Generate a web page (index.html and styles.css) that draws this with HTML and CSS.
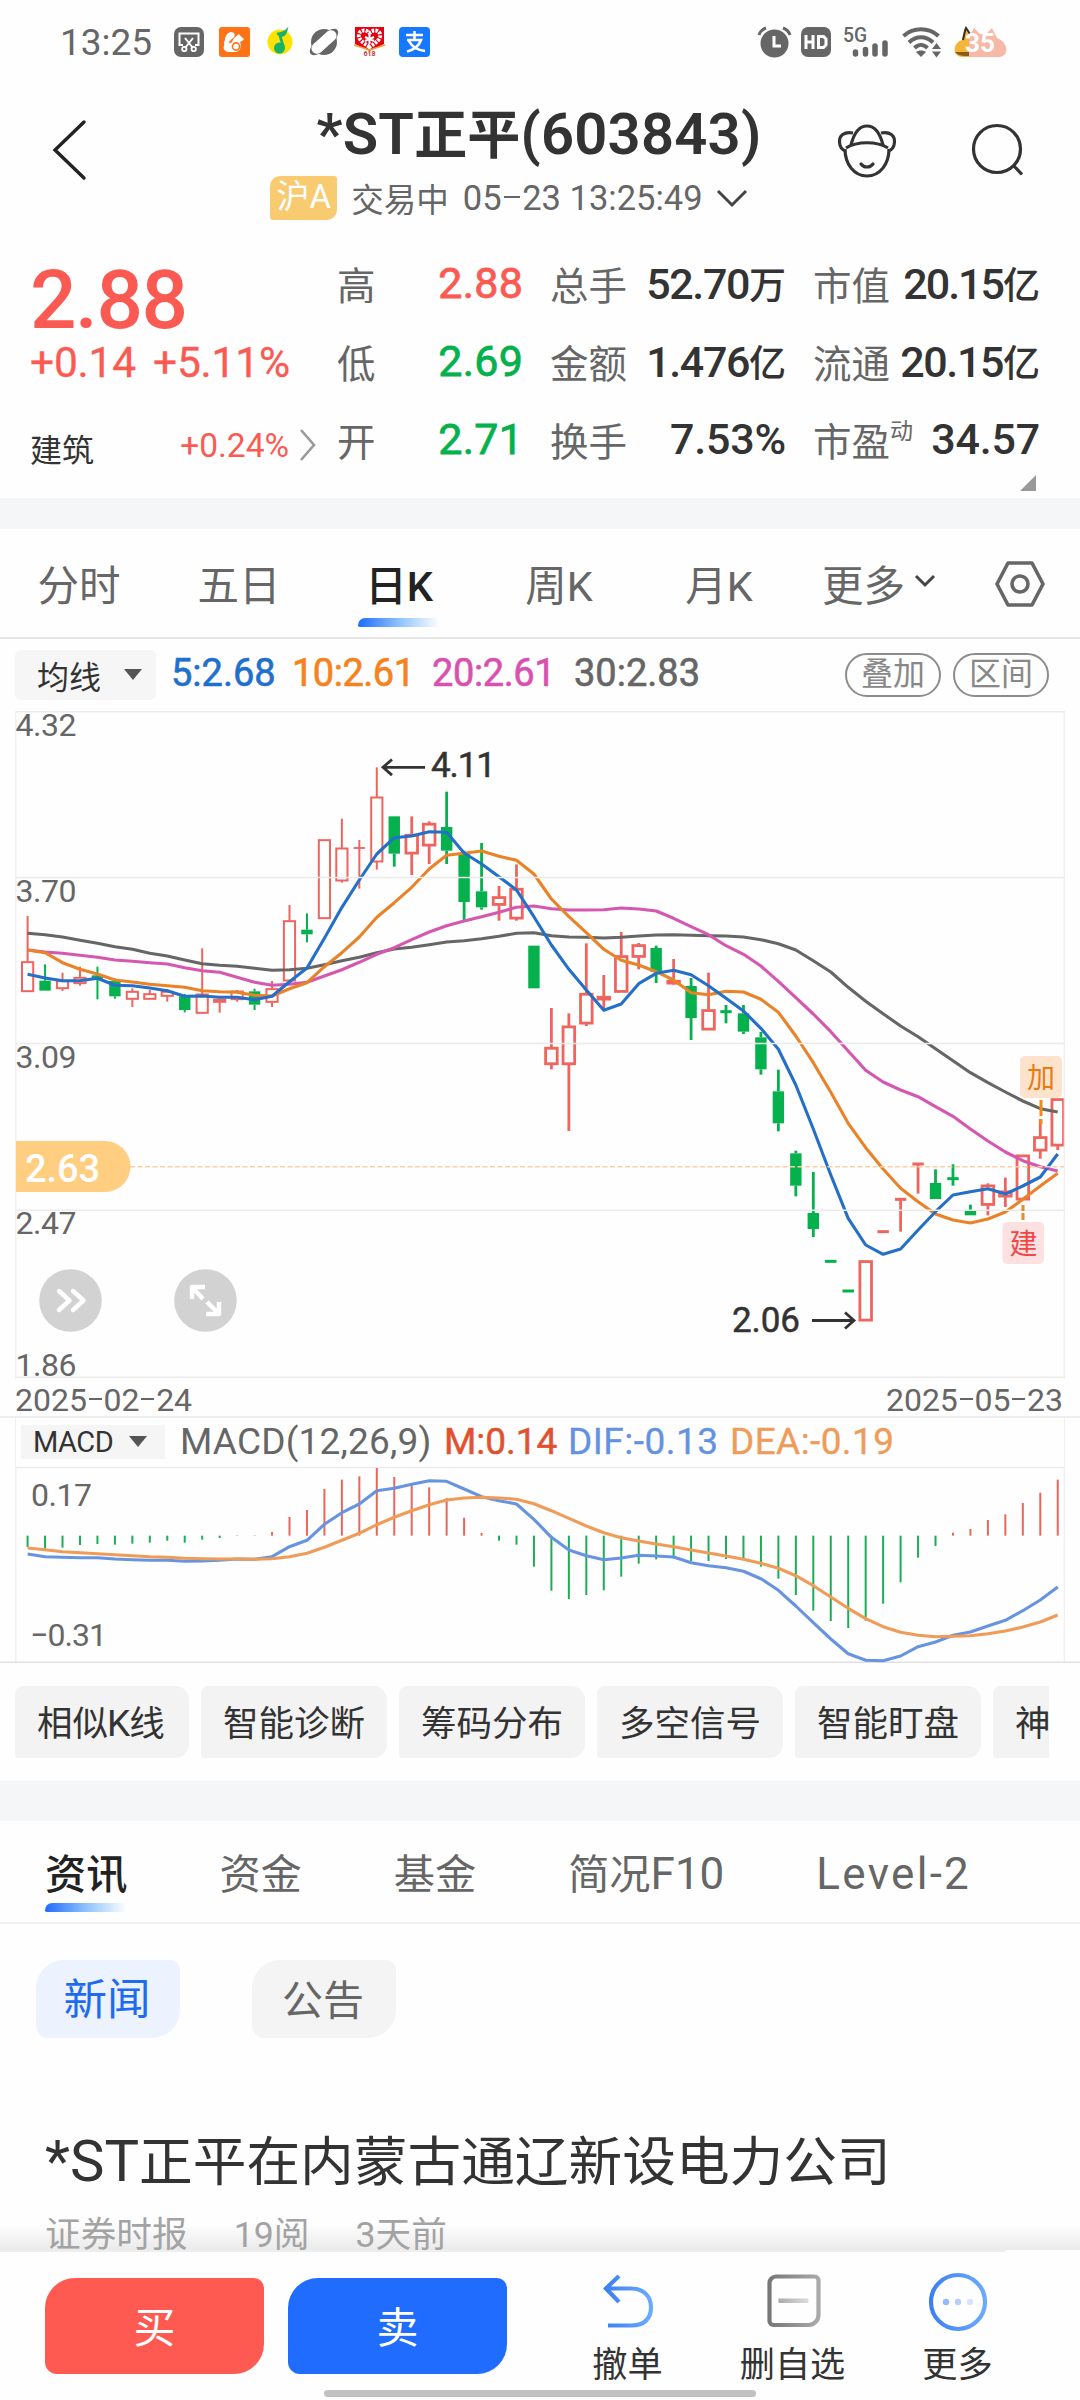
FILE: index.html
```html
<!DOCTYPE html>
<html lang="zh-CN">
<head>
<meta charset="utf-8">
<meta name="viewport" content="width=1080">
<title>*ST正平(603843)</title>
<link rel="stylesheet" href="styles.css">
</head>
<body>
<div class="screen">

<div class="status">
  <span class="clock">13:25</span>
  <div class="status-apps">
    <svg width="30" height="30" viewBox="0 0 30 30"><rect width="30" height="30" rx="7" fill="#666"/><path d="M9 18H5.500V6.500h19V18H21" fill="none" stroke="#fff" stroke-width="2"/><path d="M11 11l8 10M19 11l-8 10" stroke="#fff" stroke-width="2"/><circle cx="10.300" cy="22" r="2.200" fill="none" stroke="#fff" stroke-width="1.800"/><circle cx="19.700" cy="22" r="2.200" fill="none" stroke="#fff" stroke-width="1.800"/></svg>
    <svg width="31" height="30" viewBox="0 0 31 30"><rect width="31" height="30" rx="3" fill="#ff7216"/><path d="M6 13c0-4 3-8 6-8 4 0 5 4 2 6-2 2-4 3-4 5 2 1 3-1 4-3 1-3 4-4 6-6 1 2 3 3 5 5-1 2-3 2-4 3 2 5 0 9-4 10h-8c-4-1-5-4-4-6 1-3-1-3 1-6z" fill="#fff"/><circle cx="17" cy="19.500" r="3.600" fill="none" stroke="#ff7216" stroke-width="1.600"/></svg>
    <svg width="26" height="30" viewBox="0 0 26 30"><circle cx="13" cy="15" r="12.500" fill="#ffe100"/><path d="M10 7c3-1 6 0 9-3-1 4-3 5-6 5l3.500 11" fill="none" stroke="#17b26a" stroke-width="2.600"/><circle cx="12.500" cy="21" r="5.500" fill="#17b26a"/></svg>
    <svg width="30" height="30" viewBox="0 0 30 30"><ellipse cx="15" cy="15" rx="18" ry="7" transform="rotate(-42 15 15)" fill="#666"/><circle cx="15" cy="15" r="13" fill="#666"/><rect x="0" y="9.500" width="30" height="11" rx="5.500" transform="rotate(-42 15 15)" fill="#fff"/></svg>
    <svg width="31" height="30" viewBox="0 0 31 30"><path d="M1 0h29v17l-14.500 7L1 17z" fill="#e60012"/><path d="M15.500 20C8 15 4 12 5 7c1-4 7-5 10.500-1C19 2 25 3 26 7c1 5-3 8-10.500 13z" fill="none" stroke="#fff" stroke-width="4" stroke-dasharray="2.500 1.200"/><path d="M15.500 8v9M11 10l9 4M20 10l-9 4" stroke="#fff" stroke-width="2"/><path d="M0 18l15.500 5L31 18" fill="none" stroke="#e9a13b" stroke-width="1.500"/><text x="15.500" y="29" class="app-618">618</text></svg>
    <svg width="31" height="30" viewBox="0 0 31 30"><rect width="31" height="30" rx="4" fill="#1677ff"/><path d="M15.500 4v8M7 8h17M8 13h14c-2 6-8 10-14 11.500M10 14c3 6 8 9 16 10" fill="none" stroke="#fff" stroke-width="2.600"/></svg>
  </div>
  <div class="status-sys">
    <svg width="33" height="31" viewBox="0 0 33 31"><circle cx="16.500" cy="16.500" r="14" fill="#666"/><path d="M1 8c1-3 4-6 7-7M32 8c-1-3-4-6-7-7" stroke="#666" stroke-width="3" fill="none"/><path d="M16 9v10h7" stroke="#fff" stroke-width="3" fill="none"/></svg>
    <svg width="30" height="30" viewBox="0 0 30 30"><rect width="30" height="30" rx="7" fill="#666"/><path d="M5 8v14M5 15h7M12 8v14M17.500 9.500h5l2.500 2.500v6l-2.500 2.500h-5z" fill="none" stroke="#fff" stroke-width="3"/></svg>
    <svg width="46" height="31" viewBox="0 0 46 31"><text x="0" y="15" class="net" textLength="24" lengthAdjust="spacingAndGlyphs">5G</text><path d="M12.500 25v2M22.500 22.500v4.500M32 19v8M42 16v11" stroke="#666" stroke-width="5.500" stroke-linecap="round"/></svg>
    <svg width="41" height="31" viewBox="0 0 41 31"><g fill="none" stroke="#666" stroke-width="4"><path d="M1.500 9c10-9 25-9 35 0M7 15.500c7-7 17-7 24 0M12.500 21c4-4 9-4 13 0"/></g><path d="M14 25c3-2 7-2 10 0l-5 5z" fill="#666"/><path d="M30 22l4.500-6 4.500 6zM30 24.500l4.500 6 4.500-6z" fill="#666"/></svg>
    <svg width="55" height="31" viewBox="0 0 55 31"><path d="M16 30H10C-1 30-1 16 9 13L12 2l5 6z" fill="#f5b638"/><path d="M10 13c1-5 2-10 3-12l4 6" fill="none" stroke="#3a2a18" stroke-width="2"/><path d="M2 25c3 4 8 4 14 4v-4z" fill="#8a5a1a"/><path d="M16 30V10l5-9 6 6h6l6-6 5 10c10 3 14 18 2 19z" fill="#f8b8a8"/><text x="12" y="24.500" class="bat" textLength="30" lengthAdjust="spacingAndGlyphs">35</text></svg>
  </div>
</div>

<header class="head">
  <svg class="back" width="40" height="64" viewBox="0 0 40 64"><path d="M35 4L6 32l29 28" fill="none" stroke="#222" stroke-width="3.400" stroke-linecap="round"/></svg>
  <div class="head-mid">
    <h1 class="name">*ST<span class="name-cjk">正平</span>(603843)</h1>
    <div class="state">
      <span class="market">沪A</span>
      <span class="trading">交易中</span>
      <span class="stamp">05<i class="dash"></i>23 13:25:49</span>
      <svg width="32" height="20" viewBox="0 0 32 20"><path d="M2 3l14 14L30 3" fill="none" stroke="#444" stroke-width="3"/></svg>
    </div>
  </div>
  <svg class="face" width="60" height="56" viewBox="0 0 60 56"><g fill="none" stroke="#333" stroke-width="3.200"><path d="M8 26C8 41 17 53 30 53s22-12 22-27"/><path d="M9 25C20 18 40 18 51 25"/><path d="M14 22C17 10 22 3 30 3s13 7 16 19"/><path d="M16 10C7 8 2 13 2.500 19c.3 5 3 8 6 9M44 10c9-2 14 3 13.500 9-.3 5-3 8-6 9"/><path d="M24 41c3 4 9 4 12 0" stroke-linecap="round"/></g></svg>
  <svg class="search" width="54" height="54" viewBox="0 0 54 54"><circle cx="26" cy="26" r="23.500" fill="none" stroke="#333" stroke-width="3.200"/><path d="M42.500 42.500l8.500 9" stroke="#333" stroke-width="3.200"/></svg>
</header>

<section class="quote">
  <div class="quote-main">
    <div class="price up">2.88</div>
    <div class="change up"><span>+0.14</span><span>+5.11%</span></div>
    <div class="industry"><span>建筑</span><span class="up pct">+0.24%</span><svg width="18" height="32" viewBox="0 0 18 32"><path d="M2 1l13 15L2 31" fill="none" stroke="#999" stroke-width="2.600"/></svg></div>
  </div>
  <div class="quote-grid">
    <div class="kv"><b>高</b><em class="up">2.88</em></div>
    <div class="kv"><b>总手</b><em class="snug">52.70<s>万</s></em></div>
    <div class="kv"><b>市值</b><em class="tight">20.15<s>亿</s></em></div>
    <div class="kv"><b>低</b><em class="down">2.69</em></div>
    <div class="kv"><b>金额</b><em class="snug">1.476<s>亿</s></em></div>
    <div class="kv"><b>流通</b><em class="snug">20.15<s>亿</s></em></div>
    <div class="kv"><b>开</b><em class="down">2.71</em></div>
    <div class="kv"><b>换手</b><em>7.53%</em></div>
    <div class="kv"><b>市盈<sup>动</sup></b><em>34.57</em></div>
  </div>
  <svg class="corner" width="16" height="16" viewBox="0 0 16 16"><path d="M16 0v16H0z" fill="#999"/></svg>
</section>

<nav class="ktabs">
  <span>分时</span><span>五日</span><span class="on">日K</span><span>周K</span><span>月K</span>
  <span class="more">更多<svg width="22" height="14" viewBox="0 0 22 14"><path d="M2 2l9 9 9-9" fill="none" stroke="#444" stroke-width="3"/></svg></span>
  <span><svg width="50" height="46" viewBox="0 0 50 46"><path d="M13 2h24l11 21-11 21H13L2 23z" fill="none" stroke="#666" stroke-width="3.600" stroke-linejoin="round"/><circle cx="25" cy="23" r="8" fill="none" stroke="#666" stroke-width="3.600"/></svg></span>
</nav>

<div class="ma-row">
  <span class="pick">均线<i class="tri"></i></span>
  <span class="ma ma5">5:2.68</span><span class="ma ma10">10:2.61</span><span class="ma ma20">20:2.61</span><span class="ma ma30">30:2.83</span>
  <span class="pill first">叠加</span><span class="pill">区间</span>
</div>

<svg class="kline" width="1080" height="668" viewBox="0 711 1080 668">
  <g id="candles"></g>
  <g id="averages"></g>
  <path d="M15.800 711v668M1064.300 711v668" stroke="#eee" stroke-width="1.200"/>
  <path d="M16 711.700H1065M16 877.500H1065M16 1043.500H1065M16 1210.300H1065M16 1377.300H1065" stroke="#ebebeb" stroke-width="1.500"/>
  <path d="M130 1166.700H1064" stroke="#f9cfa6" stroke-width="1.500" stroke-dasharray="5 2.500"/>
  <g class="axis">
    <text x="15.500" y="735.500" textLength="61">4.32</text>
    <text x="15.500" y="901.500" textLength="61">3.70</text>
    <text x="15.500" y="1067.500" textLength="61">3.09</text>
    <text x="15.500" y="1234" textLength="61">2.47</text>
    <text x="15.500" y="1376" textLength="61">1.86</text>
  </g>
  <path d="M425 767.300H384M392 759.500l-9 7.800 9 7.800" class="arrow"/>
  <text x="431" y="777" class="extreme" textLength="65">4.11</text>
  <text x="732" y="1332" class="extreme" textLength="68">2.06</text>
  <path d="M812 1320.500H854M845 1312.500l9 8-9 8" class="arrow"/>
  <path d="M1041 1100v16M1041 1119v5M1023 1205v6M1023 1213v7" stroke="#ef8a1d" stroke-width="3"/>
  <rect x="1020" y="1056" width="42" height="42" rx="5" fill="#fde3cc"/><text x="1041" y="1088" class="mark add">加</text>
  <rect x="1002.500" y="1222" width="41.500" height="42" rx="5" fill="#fde0e0"/><text x="1023.500" y="1254" class="mark open">建</text>
  <path d="M16 1141h89a25.500 25.500 0 0 1 0 51H16z" fill="#ffce80"/>
  <text x="25" y="1181.500" class="cost" textLength="75">2.63</text>
  <circle cx="70.500" cy="1300.500" r="31.300" fill="#d2d2d2"/>
  <path d="M59 1291l10.500 9.500L59 1310M73 1291l10.500 9.500L73 1310" fill="none" stroke="#fff" stroke-width="4.400" stroke-linecap="round" stroke-linejoin="round"/>
  <circle cx="205.500" cy="1300.500" r="31.300" fill="#d2d2d2"/>
  <path d="M192 1299v-12h13M192 1287l11 12M207 1302l12 12M219 1302v12h-13" fill="none" stroke="#fff" stroke-width="4.400" stroke-linejoin="round"/>
</svg>

<div class="dates"><span>2025<i class="dash"></i>02<i class="dash"></i>24</span><span>2025<i class="dash"></i>05<i class="dash"></i>23</span></div>

<div class="macd-row">
  <span class="macd-pick">MACD<i class="tri"></i></span>
  <span class="m-name">MACD(12,26,9)</span><span class="m-m">M:0.14</span><span class="m-dif">DIF:-0.13</span><span class="m-dea">DEA:-0.19</span>
</div>
<svg class="macd" width="1080" height="196" viewBox="0 1467 1080 196">
  <path d="M15.800 1467v195M1064.300 1467v195" stroke="#eee" stroke-width="1.200"/>
  <path d="M16 1467.500H1065" stroke="#ebebeb" stroke-width="1.600"/>
  <g id="bars"></g>
  <path d="M0 1662.200H1080" stroke="#e0e0e0" stroke-width="1.600"/>
  <g id="macdlines"></g>
  <g class="axis">
    <text x="31" y="1506" textLength="61">0.17</text>
    <text x="30" y="1646" textLength="77">−0.31</text>
  </g>
</svg>

<div class="tools">
  <span>相似<u>K</u>线</span><span>智能诊断</span><span>筹码分布</span><span>多空信号</span><span>智能盯盘</span><span>神奇九转</span>
</div>

<nav class="infotabs">
  <span class="on">资讯</span><span>资金</span><span>基金</span><span>简况<u>F10</u></span><span class="level"><u>Level-2</u></span>
</nav>
<div class="subtabs"><span class="on">新闻</span><span>公告</span></div>

<article class="news">
  <h2><u>*ST</u>正平在内蒙古通辽新设电力公司</h2>
  <p><span>证券时报</span><span>19阅</span><span>3天前</span></p>
</article>

<footer class="bar">
  <span class="trade buy">买</span>
  <span class="trade sell">卖</span>
  <div class="acts">
    <div class="act">
      <svg width="60" height="60" viewBox="0 0 60 60"><defs><linearGradient id="ga" x1="0" x2="1"><stop offset="0" stop-color="#3f7ff2"/><stop offset="1" stop-color="#6aabfb"/></linearGradient></defs><path d="M21 4L8 16.500 21 30M9 16.500h24c13 0 20 8 20 19s-7 18-19 18H10" fill="none" stroke="url(#ga)" stroke-width="4.200"/></svg>
      <span>撤单</span>
    </div>
    <div class="act">
      <svg width="60" height="60" viewBox="0 0 60 60"><defs><linearGradient id="gb" x1="0" x2="1"><stop offset="0" stop-color="#777"/><stop offset="1" stop-color="#aaa"/></linearGradient><linearGradient id="gc" x1="0" x2="1"><stop offset="0" stop-color="#aaa"/><stop offset="1" stop-color="#ddd"/></linearGradient></defs><path d="M13 4.500h38.500a4 4 0 0 1 4 4V43a10 10 0 0 1-10 10H10.500a4 4 0 0 1-4-4V11a6.500 6.500 0 0 1 6.500-6.500z" fill="none" stroke="url(#gb)" stroke-width="4.200"/><rect x="15.500" y="26.500" width="30" height="4.500" fill="url(#gc)"/></svg>
      <span>删自选</span>
    </div>
    <div class="act">
      <svg width="60" height="60" viewBox="0 0 60 60"><circle cx="30" cy="30" r="27" fill="none" stroke="url(#ga)" stroke-width="4.200"/><circle cx="18" cy="30" r="3.200" fill="#98b9f5"/><circle cx="30" cy="30" r="3.200" fill="#b4d0fa"/><circle cx="42" cy="30" r="3.200" fill="#d4e6fd"/></svg>
      <span>更多</span>
    </div>
  </div>
  <i class="home"></i>
</footer>
</div>
<script src="chart.js"></script>
</body>
</html>
```
FILE: styles.css
```css
* { box-sizing: border-box; margin: 0; padding: 0; }
body { background: #fefefe; font-family: Roboto, "Noto Sans CJK SC", sans-serif; color: #333; }
i, em, b, s, u { font-style: normal; font-weight: inherit; text-decoration: none; }
svg { display: block; flex: none; overflow: visible; }
.kline, .macd { overflow: hidden; }
span { white-space: nowrap; }
.screen { width: 1080px; height: 2400px; overflow: hidden; position: relative; display: flex; flex-direction: column; background: #fefefe; }
.screen > * { flex: none; }
.up { color: #fb5a52; }
.down { color: #04b14c; }
.dash { display: inline-block; width: .46em; height: 2.5px; margin: 0 .07em; background: currentColor; vertical-align: .34em; }

.status { height: 66px; display: flex; align-items: flex-start; padding: 24px 72px 0 60px; }
.clock { font-size: 37px; line-height: 37px; color: #666; width: 114px; }
.status-apps { display: flex; padding-top: 3px; gap: 15px; }
.status-apps svg:nth-child(3) { margin: 0 1px 0 2px; }
.status-apps svg:nth-child(5) { margin: 0 -1px 0 0; }
.status-sys { display: flex; gap: 10px; margin-left: auto; padding-top: 3px; }
.status-sys svg:nth-child(3) { margin-left: 2px; }
.status-sys svg:nth-child(4) { margin-left: 3px; }
.app-618 { font-size: 7px; font-weight: 700; fill: #c33; text-anchor: middle; }
.net { font-size: 20px; font-weight: 500; fill: #666; }
.bat { font-size: 26px; font-weight: 700; fill: #fff; }

.head { height: 174px; display: flex; align-items: flex-start; position: relative; padding: 0 56px 0 49px; }
.back { margin-top: 52px; }
.head-mid { width: 656px; margin-left: 92px; display: flex; flex-direction: column; align-items: center; padding-top: 32px; }
.name { font-size: 58px; line-height: 72px; font-weight: 600; white-space: nowrap; padding-left: 60px; letter-spacing: .2px; }
.name-cjk { font-size: 53px; font-weight: 700; }
.state { display: flex; align-items: center; height: 44px; margin-top: 4px; color: #666; }
.market { width: 67px; height: 44px; line-height: 42px; text-align: center; background: #f8cb70; color: #fff; font-size: 33px; border-radius: 10px 3px 10px 3px; }
.trading { font-size: 32.5px; margin: -2px 0 0 14px; }
.stamp { font-size: 34.5px; margin: 0 14px; width: 239px; }
.face { position: absolute; left: 837px; top: 57px; }
.search { position: absolute; left: 971px; top: 57px; }

.quote { height: 258px; display: flex; position: relative; padding: 4px 0 0 30px; }
.quote-main { width: 307px; }
.price { font-size: 82px; line-height: 84px; margin: 14px 0 0 0; font-weight: 500; letter-spacing: -1.5px; }
.change { font-size: 42.500px; line-height: 44px; margin-top: -1px; display: flex; gap: 17px; }
.change span { letter-spacing: -.2px; -webkit-text-stroke: .3px; }
.industry { display: flex; align-items: center; height: 60px; margin-top: 33px; font-size: 32px; }
.pct { font-size: 33.500px; margin-left: auto; margin-right: 10px; margin-top: -5px; }
.industry svg { margin-right: 20px; margin-top: -6px; }
.quote-grid { width: 703px; display: grid; grid-template-columns: 186px 236px 227px; column-gap: 27px; grid-auto-rows: 78px; }
.kv { display: flex; justify-content: space-between; align-items: center; white-space: nowrap; }
.kv b { font-size: 38.500px; color: #666; }
.kv em { font-size: 43px; font-weight: 500; letter-spacing: -.2px; }
.kv em.snug { letter-spacing: -1.400px; }
.kv em.tight { letter-spacing: -2px; }
.kv em.up, .kv em.down { font-weight: 400; -webkit-text-stroke: .8px; letter-spacing: .2px; }
.kv s { font-size: 37px; letter-spacing: 0; }
.kv sup { font-size: 23px; line-height: 0; vertical-align: 17px; }
.corner { position: absolute; left: 1020px; top: 235px; }

.ktabs { height: 141px; border-top: 31px solid #f5f6f8; border-bottom: 2px solid #e6e6e6; display: grid; grid-template-columns: repeat(6, 160px) 120px; align-items: center; justify-items: center; font-size: 41.500px; color: #666; }
.ktabs span { display: flex; align-items: center; height: 46px; position: relative; margin: -1px 2px 0 0; }
.ktabs span:last-child { margin: 2px 0 0; }
.ktabs .on { color: #222; font-weight: 500; }
.on::after { content: ""; position: absolute; left: 50%; margin-left: -41px; width: 82px; height: 9px; border-radius: 8px 0 0 2px; background: linear-gradient(90deg, #1f6bff, #8ec2fd 50%, #fff); }
.ktabs .on::after { top: 58px; }
.ktabs .more svg { margin: -3px 0 0 9px; }

.ma-row { height: 72px; display: flex; align-items: center; padding: 0 31px 1px 15px; }
.pick { width: 141px; height: 50px; background: #f6f6f6; border-radius: 6px; display: flex; align-items: center; justify-content: space-between; padding: 0 14px 0 22px; font-size: 32px; }
.tri { width: 0; height: 0; border: 9px solid transparent; border-top: 11px solid #555; border-bottom: 0; }
.ma { font-size: 38px; font-weight: 400; -webkit-text-stroke: .6px; margin-top: -4px; }
.ma5 { color: #1f6fcc; margin-left: 15px; width: 121px; }
.ma10 { color: #f5821f; width: 140px; letter-spacing: -.5px; }
.ma20 { color: #d951b0; width: 142px; letter-spacing: -.4px; }
.ma30 { color: #666; }
.pill { width: 96px; height: 44px; border: 2px solid #8c8c8c; border-radius: 22px; text-align: center; line-height: 38px; font-size: 32px; color: #888; margin-left: 12px; }
.pill.first { margin-left: auto; }

.axis { font-size: 32px; fill: #666; }
.extreme { font-size: 35px; fill: #333; stroke: #333; stroke-width: .5; }
.arrow { stroke: #333; stroke-width: 2.800; fill: none; }
.mark { font-size: 28px; text-anchor: middle; }
.add { fill: #ea7a12; }
.open { fill: #f04848; }
.cost { font-size: 38px; font-weight: 500; fill: #fff; }
.dates { height: 40px; padding: 0 17px 0 15px; display: flex; justify-content: space-between; font-size: 32px; line-height: 44px; color: #666; border-bottom: 2px solid #eee; margin-top: -1px; }
.dates .dash { width: .4em; margin: 0 .06em; }
.macd-row { height: 49px; margin: 0 15px; border: solid #f0f0f0; border-width: 0 1px; display: flex; align-items: center; padding: 0 0 2px 5px; }
.macd-pick { width: 144px; height: 34px; background: #f5f5f5; display: flex; align-items: center; justify-content: space-between; padding: 0 18px 0 12px; font-size: 29px; letter-spacing: -.5px; }
.m-name, .m-m, .m-dif, .m-dea { font-size: 37px; }
.m-name { color: #666; margin-left: 15px; width: 264px; letter-spacing: .2px; }
.m-m { color: #e0522f; width: 124px; -webkit-text-stroke: .5px; }
.m-dif { color: #6492e2; width: 162px; letter-spacing: .5px; -webkit-text-stroke: .3px; }
.m-dea { color: #f09b57; letter-spacing: .4px; -webkit-text-stroke: .3px; }

.tools { height: 118px; margin: 0 31px 0 15px; display: flex; gap: 12px; align-items: center; overflow: hidden; padding-bottom: 1px; }
.tools span { flex: none; height: 72px; width: 186px; border-radius: 8px 14px 14px 4px; background: #f3f3f3; font-size: 35.500px; line-height: 76px; padding-left: 22px; }
.tools span:first-child { width: 174px; }
.tools u { font-size: 37px; margin: 0 -1px; }

.infotabs { height: 143px; border-top: 40px solid #f5f6f8; border-bottom: 2px solid #f1f1f1; display: flex; gap: 92px; padding: 26px 0 0 45px; font-size: 41.200px; line-height: 56px; color: #666; }
.infotabs span { position: relative; }
.infotabs u { font-size: 44px; line-height: 0; }
.infotabs .on { color: #222; font-weight: 500; }
.infotabs .on::after { top: 56px; }
.level u { letter-spacing: 2.300px; }
.subtabs { height: 150px; display: flex; gap: 72px; padding: 36px 0 0 36px; }
.subtabs span { width: 144px; height: 78px; border-radius: 28px 10px 28px 12px; background: #f4f4f4; color: #666; font-size: 41px; line-height: 82px; text-align: center; padding-right: 2px; }
.subtabs .on { background: #ecf2fe; color: #1f6bef; font-size: 43.500px; }
.subtabs .on::after { display: none; }

.news { height: 176px; padding: 53px 0 0 45px; overflow: hidden; background: linear-gradient(180deg, #fefefe 150px, #eaeaea 176px); }
.news h2 { font-size: 53.700px; line-height: 72px; font-weight: 400; white-space: nowrap; }
.news h2 u { font-size: 58px; line-height: 0; }
.news p { display: flex; gap: 46px; font-size: 35.700px; line-height: 48px; margin-top: 12px; color: #a3a3a3; }

.bar { height: 150px; background: #fefefe; display: flex; position: relative; padding: 28px 40px 0 45px; }
.bar::before { content: ""; position: absolute; left: 0; top: 0; width: 1005px; height: 2px; background: #eee; }
.trade { width: 219px; height: 96px; line-height: 101px; border-radius: 30px 10px 30px 12px; color: #fff; font-size: 42px; text-align: center; margin-right: 24px; }
.buy { background: #ff5a52; }
.sell { background: #1f6cff; }
.acts { display: grid; grid-template-columns: repeat(3, 165px); margin: -6px 0 0 14px; }
.act { display: flex; flex-direction: column; align-items: center; font-size: 35.200px; line-height: 44px; gap: 15px; }
.act span { margin-top: -4px; }
.home { position: absolute; left: 324px; top: 140px; width: 432px; height: 7px; border-radius: 4px; background: #c1c1c1; }
```
FILE: chart.js
```js
// Candle geometry is kept in thirds of a pixel below y = 700; columns are evenly spaced.
const NS = 'http://www.w3.org/2000/svg';
const X0 = 27.6, STEP = 17.46, UP = '#ef655e', DOWN = '#04b14c';
const cx = i => X0 + STEP * i;
const ky = v => 700 + v / 3;
const my = v => 1410 + v / 3;

function add(parent, tag, attrs) {
  const el = document.createElementNS(NS, tag);
  for (const k in attrs) el.setAttribute(k, attrs[k]);
  document.getElementById(parent).appendChild(el);
}

// direction, high, body top, body bottom, low
const candles = `R 648 785 875 875|G 793 842 872 873|R 818 842 866 873|R 800 832 851 857|G 800 826 836 898|G 835 843 889 896|R 865 874 898 921|R 870 881 898 898|R 868 874 889 905|G 882 889 930 937|R 745 882 940 940|R 895 898 907 938|R 870 873 899 905|G 866 874 914 930|R 843 866 907 921|R 615 662 843 850|G 640 689 703 727|R 419 419 656 656|R 356 444 543 548|R 420 444 444 566|R 202 291 486 509|G 349 349 461 500|R 349 403 462 525|R 364 370 438 492|G 275 381 452 492|G 452 458 606 660|G 429 574 622 629|R 558 590 616 662|R 493 565 657 662|G 737 737 865 865|R 924 1042 1094 1108|R 940 978 1094 1293|R 730 880 972 978|R 825 889 900 930|R 696 767 877 877|R 729 734 772 808|G 737 744 815 849|R 777 841 852 854|G 834 858 954 1020|R 818 929 990 990|G 915 935 935 970|G 915 940 995 1002|G 996 1012 1108 1124|G 1109 1174 1270 1294|G 1352 1360 1457 1489|G 1416 1539 1587 1611|G 1684 1684 1684 1684|G 1773 1773 1773 1773|R 1682 1682 1863 1863|R 1595 1595 1595 1595|R 1498 1498 1498 1595|R 1392 1392 1392 1481|G 1408 1449 1497 1497|G 1393 1436 1436 1457|G 1514 1533 1546 1546|R 1450 1455 1516 1546|R 1433 1473 1491 1521|R 1365 1365 1500 1500|R 1257 1310 1353 1376|R 1196 1196 1338 1350`.split('|');

candles.forEach((row, i) => {
  const p = row.split(' ');
  const [high, top, bottom, low] = p.slice(1).map(v => ky(+v));
  const x = cx(i), up = p[0] === 'R', color = up ? UP : DOWN;
  const w = i < 21 ? 2 : 2.8;
  if (top - high > .5) add('candles', 'path', { d: `M${x} ${high}V${top}`, stroke: color, 'stroke-width': w });
  if (low - bottom > .5) add('candles', 'path', { d: `M${x} ${bottom}V${low}`, stroke: color, 'stroke-width': w });
  if (bottom - top < .5) {
    add('candles', 'path', { d: `M${x - 5.7} ${top}h11.4`, stroke: color, 'stroke-width': i < 21 ? 1.8 : 3 });
  } else if (up) {
    const half = i < 21 ? 5.6 : 5.8;
    add('candles', 'rect', { x: x - half, y: top + w / 2 - .5, width: half * 2, height: Math.max(1, bottom - top - w + 1), fill: i === 33 || i === 37 ? color : '#fff', stroke: color, 'stroke-width': w });
  } else {
    add('candles', 'rect', { x: x - 5.7, y: top, width: 11.4, height: bottom - top, fill: color });
  }
});

function line(parent, values, color, width, fy) {
  const pts = values.split(' ').map((v, i) => `${cx(i).toFixed(1)},${fy(+v).toFixed(1)}`).join(' ');
  add(parent, 'polyline', { points: pts, fill: 'none', stroke: color, 'stroke-width': width, 'stroke-linejoin': 'round' });
}

line('averages', '700 704 711 721 730 740 748 760 768 780 791 796 799 805 811 809 805 794 782 772 758 747 742 734 726 722 716 709 700 698 707 711 712 714 712 708 705 704 706 707 708 711 719 731 750 782 816 862 904 941 978 1010 1046 1082 1118 1148 1176 1203 1226 1236', '#666', 3.1, ky);
line('averages', '750 756 760 766 772 780 784 788 792 803 812 817 832 847 856 853 847 828 809 787 763 743 719 696 677 663 650 637 622 618 626 630 630 629 624 627 633 655 680 704 737 763 798 844 893 942 995 1053 1111 1146 1170 1190 1220 1249 1287 1323 1356 1382 1400 1413', '#d557b0', 3.1, ky);
line('averages', '750 758 788 808 822 840 846 853 857 862 872 875 877 886 888 866 848 800 758 711 652 608 562 507 466 460 453 469 481 522 597 650 698 748 781 795 815 840 878 884 874 876 898 937 1008 1088 1177 1270 1343 1407 1465 1505 1542 1560 1569 1557 1536 1498 1458 1420', '#ea8227', 3.1, ky);
line('averages', '823 834 842 842 835 856 857 864 872 889 888 892 892 899 889 845 804 715 622 540 462 413 408 395 397 459 492 530 570 650 735 808 870 931 912 851 820 811 824 857 895 933 985 1048 1155 1287 1425 1555 1635 1663 1647 1590 1535 1485 1475 1466 1482 1458 1431 1362', '#2470c8', 3.1, ky);

const ends = '411 416 413 405 402 404 401 398 392 398 389 384 378 376 366 321 300 237 209 199 174 201 222 232 264 323 369 392 404 470 542 567 555 541 500 461 448 445 453 453 447 449 470 506 555 602 633 654 632 581 517 443 408 368 357 330 313 279 248 209'.split(' ');
ends.forEach((v, i) => add('bars', 'path', { d: `M${cx(i)} ${my(377)}V${my(+v)}`, stroke: +v < 377 ? '#e8665c' : '#1cad57', 'stroke-width': 2 }));
line('macdlines', '432 440 442 443 443 447 449 451 451 454 453 451 447 448 440 410 391 343 308 282 242 235 223 212 214 237 260 272 282 328 382 420 437 449 444 436 438 441 458 467 473 484 506 541 588 638 687 731 751 752 738 710 696 676 666 648 631 602 570 531', '#6694e0', 3.1, my);
line('macdlines', '414 419 425 428 431 434 437 440 442 445 446 447 447 448 446 440 430 412 391 370 344 322 302 284 270 264 262 264 268 281 302 325 348 368 383 393 402 410 420 429 438 448 460 475 497 527 561 595 626 650 667 676 680 679 677 671 663 651 636 615', '#f09b57', 3.1, my);
```
